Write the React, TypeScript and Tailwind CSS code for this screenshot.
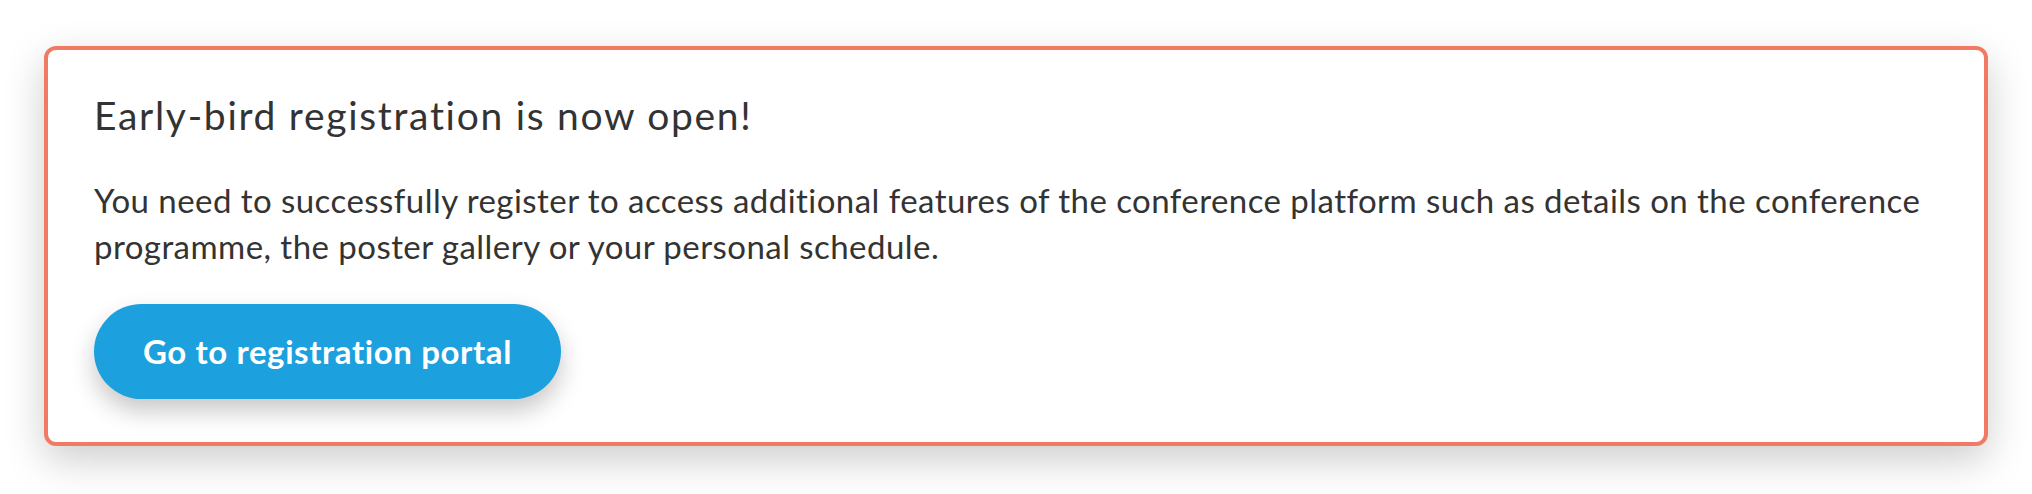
export default function App() {
  return (
    <div className="min-h-[494px] w-full bg-white px-[44px] pt-[46px] pb-[49px] font-['Lato',sans-serif] text-[#333333]">
      <section className="rounded-[12px] border-[4px] border-[#f07a63] bg-white px-[46px] pt-[41px] pb-[43px] shadow-[0_14px_40px_rgba(0,0,0,0.2)]">
        <h2 className="text-[39px] leading-[48px] font-normal tracking-[1.7px]">Early-bird registration is now open!</h2>
        <p className="mt-[38px] text-[33px] leading-[46px] tracking-[0.45px]">
          You need to successfully register to access additional features of the conference platform such as details on the conference
          programme, the poster gallery or your personal schedule.
        </p>
        <button
          type="button"
          className="mt-[35px] h-[95px] w-[467px] rounded-full bg-[#1ca0de] text-[33px] font-bold tracking-[0.6px] text-white shadow-[0_12px_24px_rgba(0,0,0,0.22)]"
        >
          Go to registration portal
        </button>
      </section>
    </div>
  );
}
